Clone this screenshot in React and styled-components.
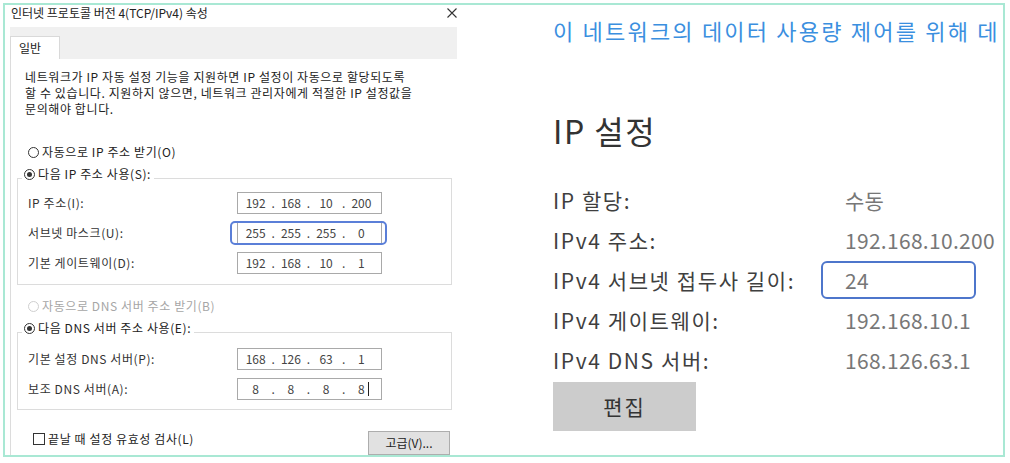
import React from 'react';
import styled, { createGlobalStyle, css } from 'styled-components';

const GlobalStyle = createGlobalStyle`
  html, body {
    margin: 0;
    padding: 0;
    background: #ffffff;
  }
  body {
    font-family: "Noto Sans CJK KR", "Noto Sans", sans-serif;
    color: #222;
  }
  * {
    box-sizing: border-box;
  }
`;

const Page = styled.div`
  width: 1010px;
  height: 463px;
  padding: 3px 5px 6px 3px;
  background: #fff;
`;

const Frame = styled.div`
  height: 100%;
  border: 2px solid #a9e8d4;
  display: flex;
  overflow: hidden;
`;

/* ---------- TCP/IPv4 properties dialog ---------- */

const Dialog = styled.div`
  width: 465px;
  flex-shrink: 0;
  font-size: 12px;
  line-height: 16px;
  color: #222;
`;

const TitleBar = styled.div`
  height: 22px;
  padding-left: 6px;
  padding-right: 13px;
  display: flex;
  justify-content: space-between;
  align-items: flex-start;
`;

const CloseIcon = styled.svg`
  margin-top: 3px;
  width: 10px;
  height: 10px;
`;

const TabStrip = styled.div`
  margin-left: 5px;
  width: 447px;
  height: 32px;
  background: #f0f0f0;
  display: flex;
  align-items: flex-end;
`;

const Tab = styled.div`
  width: 50px;
  height: 23px;
  background: #fff;
  border: 1px solid #d9d9d9;
  border-bottom: none;
  padding-left: 8px;
  line-height: 21px;
`;

const TabPanel = styled.div`
  margin-left: 5px;
  border-left: 1px solid #dcdcdc;
  padding-top: 10px;
  letter-spacing: 0.6px;
`;

const Intro = styled.p`
  margin: 0;
  padding-left: 14px;
`;

const OptionRow = styled.div`
  display: flex;
  align-items: center;
  gap: 3px;
  height: 16px;
  margin-left: 17px;
  margin-top: ${(p) => p.$top}px;
  color: ${(p) => (p.$disabled ? '#a6a6a6' : '#222')};
`;

const RadioDot = styled.span`
  width: 11px;
  height: 11px;
  border-radius: 50%;
  border: 1px solid ${(p) => (p.$disabled ? '#cfcfcf' : '#333')};
  background: #fff;
  display: inline-flex;
  align-items: center;
  justify-content: center;
  &::after {
    content: '';
    width: 5px;
    height: 5px;
    border-radius: 50%;
    background: ${(p) => (p.$checked ? '#333' : 'transparent')};
  }
`;

const GroupBox = styled.div`
  position: relative;
  margin-left: 6px;
  width: 435px;
  margin-top: ${(p) => p.$top}px;
  border: 1px solid #dcdcdc;
  padding: ${(p) => p.$pad};
  display: grid;
  grid-template-columns: 219px 145px;
  row-gap: 8px;
`;

const Legend = styled.div`
  position: absolute;
  top: -13px;
  left: 4px;
  display: flex;
  align-items: center;
  gap: 3px;
  padding: 0 3px 0 2px;
  background: #fff;
  height: 16px;
`;

const FieldLabel = styled.div`
  padding-left: 10px;
  height: 22px;
  line-height: 22px;
  color: #333;
`;

const IpBox = styled.div`
  position: relative;
  height: 22px;
  border: 1px solid #a9a9a9;
  background: #fff;
  display: grid;
  grid-template-columns: 1fr 4px 1fr 4px 1fr 4px 1fr;
  align-items: center;
  padding: 0 4px 0 2px;
  color: #444;
  letter-spacing: 0;
  ${(p) =>
    p.$focused &&
    css`
      &::after {
        content: '';
        position: absolute;
        top: -2px;
        bottom: -2px;
        left: -8px;
        right: -6px;
        border: 2px solid #5b7fd8;
        border-radius: 5px;
      }
    `}
`;

const Octet = styled.span`
  text-align: center;
`;

const Dot = styled.span`
  text-align: center;
`;

const Caret = styled.span`
  position: absolute;
  top: 3px;
  right: 12px;
  width: 1px;
  height: 14px;
  background: #222;
`;

const FooterRow = styled.div`
  margin-top: 21px;
  padding-left: 22px;
  padding-right: 20px;
  display: flex;
  justify-content: space-between;
  align-items: flex-start;
`;

const CheckLabel = styled.label`
  display: flex;
  align-items: center;
  gap: 3px;
`;

const CheckBox = styled.span`
  width: 12px;
  height: 12px;
  border: 1px solid #333;
  background: #fff;
`;

const DialogButton = styled.div`
  width: 82px;
  height: 24px;
  background: #e1e1e1;
  border: 1px solid #adadad;
  text-align: center;
  line-height: 22px;
  color: #222;
  letter-spacing: 0;
`;

/* ---------- Settings app, IP settings ---------- */

const Settings = styled.div`
  flex: 1;
  min-width: 0;
  padding-left: 83px;
  padding-top: 11px;
  color: #3f3f3f;
  white-space: nowrap;
`;

const LinkText = styled.div`
  font-size: 22px;
  line-height: 28px;
  color: #3b8fdf;
  letter-spacing: 2.2px;
`;

const Heading = styled.h2`
  margin: 66px 0 0;
  font-size: 32px;
  line-height: 40px;
  font-weight: 400;
  letter-spacing: 1.5px;
  color: #333;
`;

const InfoGrid = styled.div`
  margin-top: 30px;
  display: grid;
  grid-template-columns: 292px auto;
  grid-auto-rows: 40px;
  align-items: center;
  font-size: 21px;
`;

const InfoLabel = styled.div`
  color: #3f3f3f;
  letter-spacing: 1.6px;
`;

const InfoValue = styled.div`
  color: #777;
  letter-spacing: 0.3px;
  ${(p) =>
    p.$boxed &&
    css`
      margin-left: -24px;
      padding-left: 22px;
      width: 155px;
      height: 38px;
      line-height: 34px;
      border: 2px solid #4e76cb;
      border-radius: 6px;
    `}
`;

const EditButton = styled.div`
  margin-top: 2px;
  width: 143px;
  height: 49px;
  background: #cccccc;
  color: #333;
  font-size: 21px;
  letter-spacing: 2px;
  line-height: 49px;
  text-align: center;
`;

const IpField = ({ octets, focused, caret }) => (
  <IpBox $focused={focused}>
    {octets.map((o, i) => (
      <React.Fragment key={i}>
        {i > 0 && <Dot>.</Dot>}
        <Octet>{o}</Octet>
      </React.Fragment>
    ))}
    {caret && <Caret />}
  </IpBox>
);

const ipRows = [
  { label: 'IP 주소(I):', octets: ['192', '168', '10', '200'] },
  { label: '서브넷 마스크(U):', octets: ['255', '255', '255', '0'], focused: true },
  { label: '기본 게이트웨이(D):', octets: ['192', '168', '10', '1'] },
];

const dnsRows = [
  { label: '기본 설정 DNS 서버(P):', octets: ['168', '126', '63', '1'] },
  { label: '보조 DNS 서버(A):', octets: ['8', '8', '8', '8'], caret: true },
];

const info = [
  { label: 'IP 할당:', value: '수동' },
  { label: 'IPv4 주소:', value: '192.168.10.200' },
  { label: 'IPv4 서브넷 접두사 길이:', value: '24', boxed: true },
  { label: 'IPv4 게이트웨이:', value: '192.168.10.1' },
  { label: 'IPv4 DNS 서버:', value: '168.126.63.1' },
];

const App = () => {
  return (
    <Page>
      <GlobalStyle />
      <Frame>
        <Dialog>
          <TitleBar>
            <span>인터넷 프로토콜 버전 4(TCP/IPv4) 속성</span>
            <CloseIcon viewBox="0 0 10 10">
              <path d="M0.5 0.5 L9.5 9.5 M9.5 0.5 L0.5 9.5" stroke="#333" strokeWidth="1.1" />
            </CloseIcon>
          </TitleBar>
          <TabStrip>
            <Tab>일반</Tab>
          </TabStrip>
          <TabPanel>
            <Intro>
              네트워크가 IP 자동 설정 기능을 지원하면 IP 설정이 자동으로 할당되도록
              <br />
              할 수 있습니다. 지원하지 않으면, 네트워크 관리자에게 적절한 IP 설정값을
              <br />
              문의해야 합니다.
            </Intro>

            <OptionRow $top={27}>
              <RadioDot />
              <span>자동으로 IP 주소 받기(O)</span>
            </OptionRow>

            <GroupBox $top={18} $pad="13px 0 10px 0">
              <Legend>
                <RadioDot $checked />
                <span>다음 IP 주소 사용(S):</span>
              </Legend>
              {ipRows.map((r) => (
                <React.Fragment key={r.label}>
                  <FieldLabel>{r.label}</FieldLabel>
                  <IpField octets={r.octets} focused={r.focused} />
                </React.Fragment>
              ))}
            </GroupBox>

            <OptionRow $top={13} $disabled>
              <RadioDot $disabled />
              <span>자동으로 DNS 서버 주소 받기(B)</span>
            </OptionRow>

            <GroupBox $top={18} $pad="15px 0 9px 0">
              <Legend>
                <RadioDot $checked />
                <span>다음 DNS 서버 주소 사용(E):</span>
              </Legend>
              {dnsRows.map((r) => (
                <React.Fragment key={r.label}>
                  <FieldLabel>{r.label}</FieldLabel>
                  <IpField octets={r.octets} caret={r.caret} />
                </React.Fragment>
              ))}
            </GroupBox>

            <FooterRow>
              <CheckLabel>
                <CheckBox />
                <span>끝날 때 설정 유효성 검사(L)</span>
              </CheckLabel>
              <DialogButton>고급(V)...</DialogButton>
            </FooterRow>
          </TabPanel>
        </Dialog>

        <Settings>
          <LinkText>이 네트워크의 데이터 사용량 제어를 위해 데</LinkText>
          <Heading>IP 설정</Heading>
          <InfoGrid>
            {info.map((row) => (
              <React.Fragment key={row.label}>
                <InfoLabel>{row.label}</InfoLabel>
                <InfoValue $boxed={row.boxed}>{row.value}</InfoValue>
              </React.Fragment>
            ))}
          </InfoGrid>
          <EditButton>편집</EditButton>
        </Settings>
      </Frame>
    </Page>
  );
};

export default App;
